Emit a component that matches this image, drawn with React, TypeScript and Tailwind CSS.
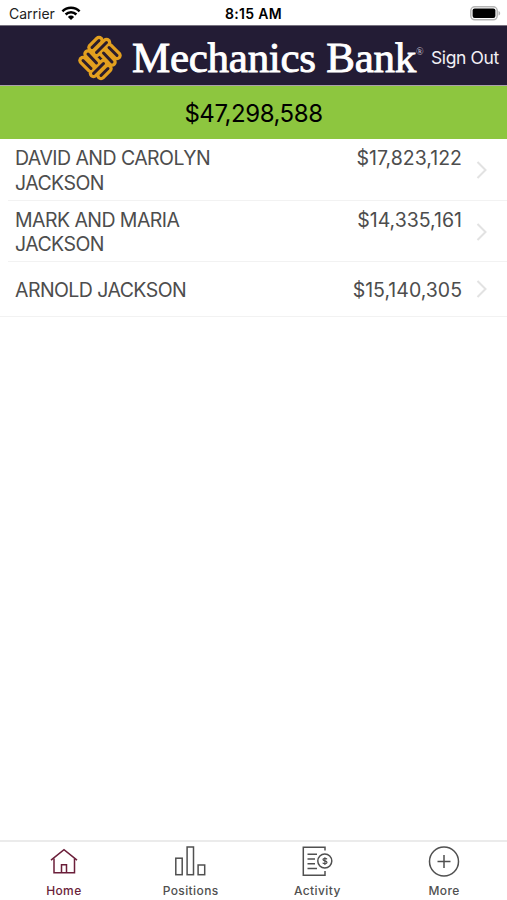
import React from 'react';

type Account = {
  name: string;
  total: string;
};

const accounts: Account[] = [
  { name: 'DAVID AND CAROLYN JACKSON', total: '$17,823,122' },
  { name: 'MARK AND MARIA JACKSON', total: '$14,335,161' },
  { name: 'ARNOLD JACKSON', total: '$15,140,305' },
];

function WifiIcon() {
  return (
    <svg width="20" height="15" viewBox="0 0 20 15" fill="none" stroke="#000" strokeWidth="2.5">
      <path d="M1.4 5.3A12.2 12.2 0 0 1 18.6 5.3" />
      <path d="M4.6 8.5A7.7 7.7 0 0 1 15.4 8.5" />
      <path d="M10 14L6.9 10.9A4.4 4.4 0 0 1 13.1 10.9Z" fill="#000" stroke="none" />
    </svg>
  );
}

function BatteryIcon() {
  return (
    <svg width="31" height="15" viewBox="0 0 31 15">
      <rect x="0.8" y="0.8" width="26.4" height="13" rx="4" fill="#fff" stroke="#b5b5b5" strokeWidth="1.5" />
      <rect x="2.6" y="2.6" width="22.8" height="9.4" rx="2" fill="#000" />
      <path d="M28.5 5v4.6c1-.4 1.7-1.2 1.7-2.3S29.5 5.4 28.5 5Z" fill="#b5b5b5" />
    </svg>
  );
}

// Basket weave: four pairs of slots around a diamond
const slots = [
  'M-8 -10.5L-1 -17.5',
  'M-3.5 -5.5L6.5 -15.5',
  'M9 -10.5L17 -2.5',
  'M3.5 -5L12 4',
  'M8 10.5L1 17.5',
  'M3.5 5.5L-6.5 15.5',
  'M-9 10.5L-17 2.5',
  'M-3.5 5L-12 -4',
];

function BankMark() {
  return (
    <svg width="44" height="48" viewBox="-22 -24 44 48" fill="none" strokeLinecap="round">
      {slots.map((d) => (
        <path key={d} d={d} stroke="#e3a01f" strokeWidth="9.5" />
      ))}
      {slots.map((d) => (
        <path key={d} d={d} stroke="#2b1d2c" strokeWidth="3" />
      ))}
    </svg>
  );
}

function HomeIcon() {
  return (
    <svg width="32" height="32" viewBox="0 0 32 32" fill="none" stroke="#6b1f3a" strokeWidth="1.5">
      <path d="M4 15.2L17 4.6L30 15.2" />
      <path d="M7 13.5V27.7H27.5V13.5" />
      <path d="M14.5 27.7V19.7H19.5V27.7" />
    </svg>
  );
}

function PositionsIcon() {
  return (
    <svg width="32" height="32" viewBox="0 0 32 32" fill="none" stroke="#505050" strokeWidth="1.5">
      <rect x="1.8" y="13.2" width="6.4" height="16.5" />
      <rect x="13.1" y="2" width="6.4" height="27.7" />
      <rect x="24.1" y="20" width="6.6" height="9.7" />
    </svg>
  );
}

function ActivityIcon() {
  return (
    <svg width="32" height="32" viewBox="0 0 32 32" fill="none" stroke="#505050" strokeWidth="1.5">
      <path d="M24 5.5V2.3H2.3V30.3H24V26" />
      <path d="M6.5 9.2H16M6.5 14H14M6.5 18.8H14M6.5 23.6H16" />
      <circle cx="23.8" cy="16" r="7" />
      <path d="M26 14.3C25.5 13.3 22 12.9 22 14.6C22 16.4 26 15.5 26 17.5C26 19.2 22.3 19 21.7 17.7M23.9 12.2V20" strokeWidth="1.2" />
    </svg>
  );
}

function MoreIcon() {
  return (
    <svg width="32" height="32" viewBox="0 0 32 32" fill="none" stroke="#505050" strokeWidth="1.5">
      <circle cx="16" cy="16.5" r="14.5" />
      <path d="M9.5 16.5H22.5M16 10V23" />
    </svg>
  );
}

const tabs = [
  { label: 'Home', icon: HomeIcon, color: 'text-[#6b1f3a]' },
  { label: 'Positions', icon: PositionsIcon, color: 'text-[#505050]' },
  { label: 'Activity', icon: ActivityIcon, color: 'text-[#505050]' },
  { label: 'More', icon: MoreIcon, color: 'text-[#505050]' },
];

export default function App() {
  return (
    <div className="flex h-[900px] w-[507px] flex-col overflow-hidden bg-white font-['Inter',sans-serif]">
      {/* Status bar */}
      <div className="grid h-[25px] shrink-0 grid-cols-3 items-center pt-0.5">
        <div className="flex items-center gap-1.5 pl-[9px] text-[14px] text-[#222]">
          <span>Carrier</span>
          <WifiIcon />
        </div>
        <div className="text-center text-[14px] font-semibold tracking-[0.3px] text-black">8:15 AM</div>
        <div className="flex justify-end pr-1.5">
          <BatteryIcon />
        </div>
      </div>

      {/* Brand header */}
      <header className="flex h-[61px] shrink-0 items-center border-b border-[#aaa0aa] border-t border-t-[#77727f] bg-[#231c35] pl-[78px] pr-2 pt-1">
        <BankMark />
        <div className="ml-[10px] flex w-[292px] items-start whitespace-nowrap text-white">
          <span className="font-['Liberation_Serif',serif] text-[43px] leading-[52px] tracking-[-0.27px] [-webkit-text-stroke:0.9px_white]">Mechanics Bank</span>
          <span className="mt-3 font-['Liberation_Serif',serif] text-[10px] text-[#c9c5d0]">®</span>
        </div>
        <button className="ml-auto whitespace-nowrap pt-0.5 text-[17.5px] tracking-[-0.35px] text-[#f2f0f5]">Sign Out</button>
      </header>

      {/* Combined total */}
      <div className="flex h-[53px] shrink-0 items-center justify-center bg-[#8dc63f] pt-0.5 text-[24px] tracking-[-0.45px] text-black">
        <span>$47,298,588</span>
      </div>

      {/* Account list */}
      <ul className="border-b border-[#f2f2f2] text-[19.5px] leading-[24.5px] text-[#4d4d4d]">
        {accounts.map((account, index) => (
          <li
            key={account.name}
            className={`ml-2 flex pl-[7px] pr-[19px] ${index < 2 ? 'h-[61.5px] border-b border-[#f2f2f2] pt-[7px]' : 'h-[54px] pt-4'}`}
          >
            <span className="w-[210px] tracking-[-0.56px]">{account.name}</span>
            <span className="ml-auto">{account.total}</span>
            <svg
              className={index < 2 ? 'ml-3.5 mt-[15px]' : 'ml-3.5 mt-[2px]'}
              width="12"
              height="18"
              viewBox="0 0 12 18"
              fill="none"
              stroke="#e2e2e2"
              strokeWidth="2"
            >
              <path d="M1.5 1L9.5 9L1.5 17" />
            </svg>
          </li>
        ))}
      </ul>

      {/* Tab bar */}
      <nav className="mt-auto grid h-[60px] shrink-0 grid-cols-4 border-t-2 border-[#ebebeb]">
        {tabs.map((tab) => {
          const Icon = tab.icon;
          return (
            <button key={tab.label} className={`flex flex-col items-center pt-[3px] ${tab.color}`}>
              <Icon />
              <span className="mt-1.5 pl-px text-[12px] font-medium leading-4 tracking-[0.4px]">{tab.label}</span>
            </button>
          );
        })}
      </nav>
    </div>
  );
}
